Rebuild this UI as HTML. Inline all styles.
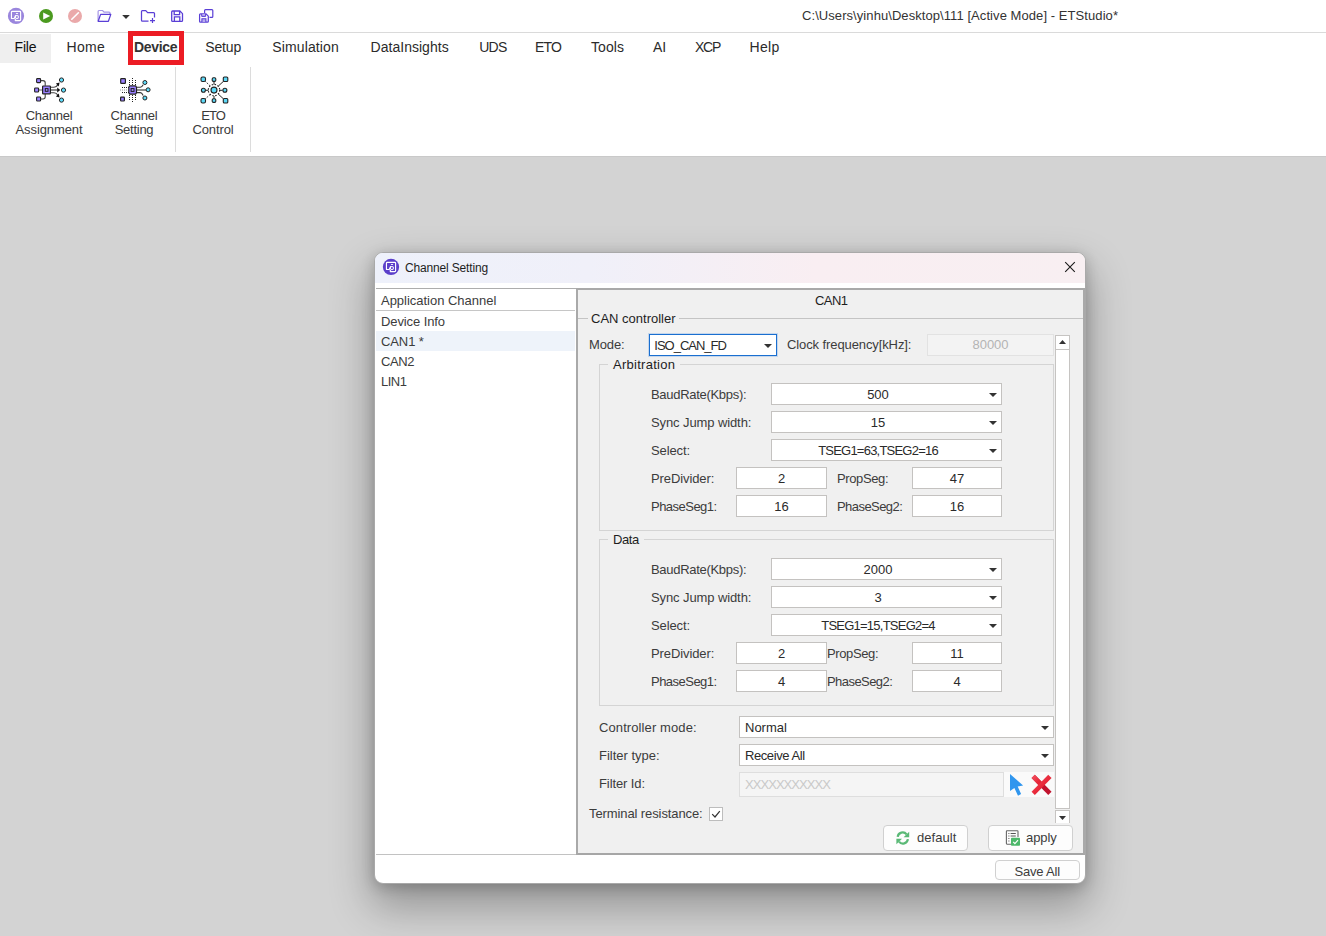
<!DOCTYPE html>
<html>
<head>
<meta charset="utf-8">
<title>ETStudio</title>
<style>
*{box-sizing:border-box;margin:0;padding:0}
html,body{width:1326px;height:936px;overflow:hidden;background:#d3d3d3}
body{font-family:"Liberation Sans",sans-serif;font-size:13px;color:#1a1a1a;position:relative}
.abs{position:absolute}
.t{position:absolute;white-space:nowrap;line-height:16px}
/* top */
#titlebar{left:0;top:0;width:1326px;height:32px;background:#fff}
#tline{left:0;top:32px;width:1326px;height:1px;background:#dadada}
#ribbon{left:0;top:33px;width:1326px;height:123px;background:#fff}
#filetab{left:0;top:34px;width:51px;height:29px;background:#efefef}
.tab{position:absolute;top:39px;font-size:14px;line-height:17px;white-space:nowrap;color:#2b2b2b;letter-spacing:-0.15px}
#devbox{left:128px;top:31px;width:56px;height:34px;border:5px solid #ec1c24;background:#fff}
.sep{position:absolute;top:67px;width:1px;height:85px;background:#dcdcdc}
.rl{position:absolute;font-size:13px;line-height:14px;text-align:center;color:#3a3a3a;white-space:nowrap;letter-spacing:-0.1px}
/* dialog */
#shadow{left:375px;top:253px;width:710px;height:630px;border-radius:8px;box-shadow:0 20px 42px 4px rgba(0,0,0,.30),0 3px 14px 1px rgba(0,0,0,.20)}
#dlg{left:374px;top:252px;width:712px;height:632px;border-radius:9px;background:#fff;overflow:hidden;border:1px solid #a9a9a9}
#dtitle{left:0;top:0;width:710px;height:30px;background:linear-gradient(90deg,#eef1fb 0%,#f0f0f9 30%,#f9eef2 62%,#f8eff2 100%)}
#left{left:1px;top:35px;width:200px;height:567px;background:#fff;border-top:1px solid #adadad;border-bottom:1px solid #c2c2c2}
#right{left:201px;top:35px;width:509px;height:567px;background:#f0f0f0;border:2px solid #a9a9a9;border-bottom-color:#a6a6a6 }
.lbl{position:absolute;white-space:nowrap;line-height:16px;font-size:13px;color:#3c3c3c;letter-spacing:-0.1px}
.dk{color:#1e1e1e}
.box{position:absolute;background:#fff;border:1px solid #c4c2c0;height:22px;font-size:13px;line-height:21px;text-align:center;color:#2a2a2a;white-space:nowrap}
.cmb{padding-right:17px}
.cmb:after{content:"";position:absolute;right:4px;top:9px;border-left:4px solid transparent;border-right:4px solid transparent;border-top:4px solid #333}
.arr{position:absolute;border-left:4px solid transparent;border-right:4px solid transparent;border-top:4px solid #333}
.grp{position:absolute;border:1px solid #d4d4d4}
.gl{position:absolute;background:#f0f0f0;padding:0 3px;font-size:13px;line-height:16px;color:#1e1e1e;white-space:nowrap}
.btn{position:absolute;background:#fdfdfd;border:1px solid #d0d0d0;border-radius:4px;font-size:13px;line-height:20px;color:#2a2a2a;white-space:nowrap}
</style>
</head>
<body>
<!-- title bar -->
<div class="abs" id="titlebar"></div>
<div class="abs" id="tline"></div>
<div class="abs" id="ribbon"></div>
<div class="abs" id="filetab"></div>
<div class="abs" style="left:0;top:156px;width:1326px;height:1px;background:#c9c9c9"></div>
<div class="t" style="left:802px;top:8px;font-size:13px;color:#333;letter-spacing:0.07px">C:\Users\yinhu\Desktop\111 [Active Mode] - ETStudio*</div>

<!-- tabs -->
<div class="abs" id="devbox"></div>
<div class="tab" style="left:14.5px;color:#111">File</div>
<div class="tab" style="left:66.5px;letter-spacing:.3px">Home</div>
<div class="tab" style="left:134px;font-weight:bold;letter-spacing:-0.33px;color:#333">Device</div>
<div class="tab" style="left:205.3px;letter-spacing:-.15px">Setup</div>
<div class="tab" style="left:272.3px;letter-spacing:.12px">Simulation</div>
<div class="tab" style="left:370.6px;letter-spacing:0.02px">DataInsights</div>
<div class="tab" style="left:479.2px;letter-spacing:-.75px">UDS</div>
<div class="tab" style="left:535px;letter-spacing:-.8px">ETO</div>
<div class="tab" style="left:591px;letter-spacing:.1px">Tools</div>
<div class="tab" style="left:653px">AI</div>
<div class="tab" style="left:695px;letter-spacing:-1.25px">XCP</div>
<div class="tab" style="left:749.5px;letter-spacing:.3px">Help</div>

<!-- ribbon -->
<div class="sep" style="left:175px"></div>
<div class="sep" style="left:250px"></div>
<div class="rl" style="left:9px;top:109px;width:80px"><span style="letter-spacing:-.25px">Channel</span><br>Assignment</div>
<div class="rl" style="left:94px;top:109px;width:80px"><span style="letter-spacing:-.2px">Channel</span><br><span style="letter-spacing:-.25px">Setting</span></div>
<div class="rl" style="left:173px;top:109px;width:80px"><span style="letter-spacing:-1px">ETO</span><br>Control</div>

<!-- dialog -->
<div class="abs" id="shadow"></div>
<div class="abs" id="dlg">
  <div class="abs" id="dtitle"></div>
  <div class="t" style="left:30px;top:7px;font-size:12px;color:#1e1e1e;letter-spacing:-0.16px">Channel Setting</div>
  <div class="abs" id="left"></div>
  <div class="abs" id="right"></div>
</div>

<!-- ===== dialog content (page-absolute coords) ===== -->
<div class="abs" id="content" style="left:0;top:0;width:0;height:0">
<!-- left list -->
<div class="abs" style="left:376px;top:310px;width:199px;height:1px;background:#c6c6c6"></div>
<div class="abs" style="left:376px;top:331px;width:199px;height:20px;background:#eef3fa"></div>
<div class="lbl" style="left:381px;top:293px;letter-spacing:-0.02px">Application Channel</div>
<div class="lbl" style="left:381px;top:314px">Device Info</div>
<div class="lbl" style="left:381px;top:334px">CAN1 *</div>
<div class="lbl" style="left:381px;top:354px;letter-spacing:-.4px">CAN2</div>
<div class="lbl" style="left:381px;top:374px;letter-spacing:-.5px">LIN1</div>

<!-- right header -->
<div class="lbl dk" style="left:815px;top:293px;letter-spacing:-.55px">CAN1</div>
<!-- CAN controller group -->
<div class="abs" style="left:578px;top:318px;width:505px;height:1px;background:#c4c4c4"></div>
<div class="gl" style="left:588px;top:311px">CAN controller</div>
<div class="lbl" style="left:589px;top:337px">Mode:</div>
<div class="box" style="left:649px;top:334px;width:128px;height:22px;border:1px solid #1a6fd0;box-shadow:0 0 0 1px rgba(120,170,230,.35);text-align:left;padding-left:4.300px;line-height:22px;letter-spacing:-1px" >ISO_CAN_FD<span class="arr" style="right:4px;top:9px"></span></div>
<div class="lbl" style="left:787px;top:337px">Clock frequency[kHz]:</div>
<div class="box" style="left:927px;top:334px;width:127px;background:#f3f3f3;border-color:#e2e2e2;color:#b4b4b4;line-height:19px">80000</div>

<!-- scrollbar -->
<div class="abs" style="left:1055px;top:335px;width:15px;height:474px;background:#fff;border:1px solid #c6c4c2"></div>
<div class="abs" style="left:1055px;top:335px;width:15px;height:15px;background:#fff;border:1px solid #c6c4c2"></div>
<div class="abs" style="left:1055px;top:810px;width:15px;height:13px;background:#fff;border:1px solid #c6c4c2;border-bottom:none"></div>
<div class="abs" style="left:1059px;top:340px;width:7px;height:4px;background:#333;clip-path:polygon(50% 0,100% 100%,0 100%)"></div>
<div class="abs" style="left:1059px;top:816px;width:7px;height:4px;background:#333;clip-path:polygon(0 0,100% 0,50% 100%)"></div>

<!-- Arbitration -->
<div class="grp" style="left:599px;top:364px;width:455px;height:167px"></div>
<div class="gl" style="left:608px;top:357px;padding:0 5px;letter-spacing:.27px">Arbitration</div>
<div class="lbl" style="left:651px;top:387px;letter-spacing:-.3px">BaudRate(Kbps):</div>
<div class="box cmb" style="left:771px;top:383px;width:231px">500</div>
<div class="lbl" style="left:651px;top:415px">Sync Jump width:</div>
<div class="box cmb" style="left:771px;top:411px;width:231px">15</div>
<div class="lbl" style="left:651px;top:443px">Select:</div>
<div class="box cmb" style="left:771px;top:439px;width:231px;letter-spacing:-.78px">TSEG1=63,TSEG2=16</div>
<div class="lbl" style="left:651px;top:471px">PreDivider:</div>
<div class="box" style="left:736px;top:467px;width:91px">2</div>
<div class="lbl" style="left:837px;top:471px;letter-spacing:-.38px">PropSeg:</div>
<div class="box" style="left:912px;top:467px;width:90px">47</div>
<div class="lbl" style="left:651px;top:499px;letter-spacing:-.52px">PhaseSeg1:</div>
<div class="box" style="left:736px;top:495px;width:91px">16</div>
<div class="lbl" style="left:837px;top:499px;letter-spacing:-.56px">PhaseSeg2:</div>
<div class="box" style="left:912px;top:495px;width:90px">16</div>

<!-- Data -->
<div class="grp" style="left:599px;top:539px;width:455px;height:167px"></div>
<div class="gl" style="left:608px;top:532px;padding:0 5px;letter-spacing:-.4px">Data</div>
<div class="lbl" style="left:651px;top:562px;letter-spacing:-.3px">BaudRate(Kbps):</div>
<div class="box cmb" style="left:771px;top:558px;width:231px">2000</div>
<div class="lbl" style="left:651px;top:590px">Sync Jump width:</div>
<div class="box cmb" style="left:771px;top:586px;width:231px">3</div>
<div class="lbl" style="left:651px;top:618px">Select:</div>
<div class="box cmb" style="left:771px;top:614px;width:231px;letter-spacing:-.76px">TSEG1=15,TSEG2=4</div>
<div class="lbl" style="left:651px;top:646px">PreDivider:</div>
<div class="box" style="left:736px;top:642px;width:91px">2</div>
<div class="lbl" style="left:827px;top:646px;letter-spacing:-.38px">PropSeg:</div>
<div class="box" style="left:912px;top:642px;width:90px">11</div>
<div class="lbl" style="left:651px;top:674px;letter-spacing:-.52px">PhaseSeg1:</div>
<div class="box" style="left:736px;top:670px;width:91px">4</div>
<div class="lbl" style="left:827px;top:674px;letter-spacing:-.56px">PhaseSeg2:</div>
<div class="box" style="left:912px;top:670px;width:90px">4</div>

<!-- bottom rows -->
<div class="lbl" style="left:599px;top:720px;letter-spacing:.1px">Controller mode:</div>
<div class="box cmb" style="left:739px;top:716px;width:315px;text-align:left;padding-left:5px">Normal</div>
<div class="lbl" style="left:599px;top:748px;letter-spacing:0px">Filter type:</div>
<div class="box cmb" style="left:739px;top:744px;width:315px;text-align:left;padding-left:5px;letter-spacing:-.42px">Receive All</div>
<div class="lbl" style="left:599px;top:776px">Filter Id:</div>
<div class="abs" style="left:1004px;top:772px;width:50px;height:25px;background:#fafafa"></div>
<div class="box" style="left:739px;top:772px;width:265px;height:25px;background:#f5f5f5;border-color:#dedede;color:#c9c9c9;text-align:left;padding-left:5px;line-height:23px;letter-spacing:-.95px">XXXXXXXXXXX</div>
<div class="lbl" style="left:589px;top:806px">Terminal resistance:</div>
<div class="abs" style="left:709px;top:807px;width:14px;height:14px;background:#fff;border:1px solid #bdbdbd"></div>

<!-- buttons -->
<div class="btn" style="left:883px;top:825px;width:85px;height:26px"></div>
<div class="lbl" style="left:917px;top:830px;letter-spacing:.05px">default</div>
<div class="btn" style="left:988px;top:825px;width:85px;height:26px"></div>
<div class="lbl" style="left:1026px;top:830px">apply</div>
<div class="btn" style="left:995px;top:860px;width:85px;height:20px"></div>
<div class="lbl" style="left:1014.5px;top:864px;letter-spacing:-.2px">Save All</div>
</div>

<!-- ===== icons ===== -->
<!-- titlebar icons -->
<svg class="abs" style="left:0;top:0" width="230" height="32" viewBox="0 0 230 32">
  <!-- app -->
  <circle cx="16" cy="15.900" r="8.100" fill="#9a86dd"/>
  <g transform="translate(-375 -251)">
  <path d="M390.300 269.900V271.550H394.700Q395.600 271.550 395.600 270.650V263.300Q395.600 262.400 394.700 262.400H387.350Q386.450 262.400 386.450 263.300V269.450H389.200L390.700 266.300" fill="none" stroke="#fff" stroke-width="1.150" stroke-linejoin="round"/>
  <circle cx="391.900" cy="268.100" r="1.550" fill="none" stroke="#fff" stroke-width="1.050"/>
  <path d="M390.900 264.500H393.100" stroke="#fff" stroke-width=".900"/>
  </g>
  <!-- play -->
  <circle cx="46" cy="16" r="7" fill="#4b9a1f"/>
  <path d="M43.2 12.4L50.2 16L43.2 19.6Z" fill="#fff"/>
  <!-- stop -->
  <circle cx="75" cy="16" r="7" fill="#eaa9aa"/>
  <path d="M71.8 19.2L78.4 12.8" stroke="#fff" stroke-width="1.6" stroke-linecap="round"/>
  <!-- folder open -->
  <path d="M98.1 21.3V11.4q0-.9.9-.9h3.6l1.5 1.7h5q.9 0 .9.9v1.3" fill="none" stroke="#a595e6" stroke-width="1.2"/>
  <path d="M98.2 21.3L100.6 14.4h10.2L108.4 21.3Z" fill="none" stroke="#5a3fd6" stroke-width="1.25" stroke-linejoin="round"/>
  <!-- caret -->
  <path d="M122.2 15.1h7.6L126 19Z" fill="#333"/>
  <!-- new folder -->
  <path d="M148.5 21.2H142.4q-.9 0-.9-.9V11.6q0-.9.9-.9h3.4l1.8 2h6q.9 0 .9.9v4" fill="none" stroke="#5a3fd6" stroke-width="1.25" stroke-linejoin="round"/>
  <path d="M150 20.6h5M152.5 18.1v5" stroke="#5a3fd6" stroke-width="1.2"/>
  <!-- save -->
  <path d="M171.7 11.9q0-.9.9-.9h7.3l2.6 2.6v6.9q0 .9-.9.9h-9q-.9 0-.9-.9Z" fill="none" stroke="#5a3fd6" stroke-width="1.3" stroke-linejoin="round"/>
  <path d="M174.2 11v3.6h5.4V11M174.4 21.4v-4.6h5.4v4.6" fill="none" stroke="#5a3fd6" stroke-width="1.3"/>
  <!-- save all -->
  <path d="M204.6 13V10.6q0-.9.9-.9h6.4q.9 0 .9.9v5.8q0 .9-.9.9h-2.4" fill="none" stroke="#5a3fd6" stroke-width="1.2"/>
  <path d="M199.6 14.8q0-.9.9-.9h5.6l2.2 2.2v5.1q0 .9-.9.9h-6.900q-.9 0-.9-.9Z" fill="none" stroke="#5a3fd6" stroke-width="1.25" stroke-linejoin="round"/>
  <path d="M201.7 14v2.400h3.900V14" fill="#b9acef" stroke="#5a3fd6" stroke-width="1"/>
  <path d="M201.900 22v-3.300h4v3.300" fill="#b9acef" stroke="#5a3fd6" stroke-width="1.1"/>
</svg>

<!-- ribbon icon 1 : channel assignment -->
<svg class="abs" style="left:28px;top:70px" width="44" height="40" viewBox="28 70 44 40">
  <g fill="none" stroke="#444" stroke-width="1.1">
    <path d="M40.800 80.600h2.200q2.200 0 2.200 2.200v3"/>
    <path d="M40.800 99h2.200q2.200 0 2.200-2.200v-3"/>
    <path d="M50.600 87.200h3.400q2.400 0 4-2.600"/>
    <path d="M50.600 92.800h3.400q2.400 0 4 2.600"/>
  </g>
  <path d="M38.700 90h3.600" stroke="#aaa" stroke-width="1.8"/>
  <path d="M50.600 90h7" stroke="#888" stroke-width="1.900"/>
  <path d="M57.200 87.500L60.200 90L57.200 92.500Z" fill="#111"/>
  <path d="M55.900 83.500L59.600 82.600L58.700 86.500Z" fill="#111"/>
  <path d="M55.900 96.500L59.600 97.400L58.700 93.500Z" fill="#111"/>
  <g fill="#9a80ff" stroke="#222" stroke-width="1.1">
    <rect x="36.600" y="78.600" width="4" height="4" rx=".8"/>
    <rect x="34.600" y="88" width="4" height="4" rx=".8"/>
    <rect x="36.600" y="97" width="4" height="4" rx=".8"/>
    <rect x="42.600" y="86" width="7.800" height="7.800" rx=".6" stroke-width="1.200"/>
  </g>
  <rect x="45.300" y="88.600" width="2.700" height="2.700" fill="#a48cff" stroke="#1a1a1a" stroke-width="1"/>
  <g fill="#5edcfb" stroke="#222" stroke-width="1">
    <circle cx="61.500" cy="80" r="2.100"/>
    <circle cx="63.500" cy="90.100" r="2.100"/>
    <circle cx="61.500" cy="100.100" r="2.100"/>
  </g>
</svg>

<!-- ribbon icon 2 : channel setting -->
<svg class="abs" style="left:112px;top:70px" width="44" height="40" viewBox="112 70 44 40">
  <g stroke="#222" stroke-width="1" stroke-dasharray="1 1" fill="none">
    <path d="M129.500 80v6M132.500 78v8M135.500 80v6"/>
    <path d="M129.500 95v5M132.500 95v7M135.500 95v5"/>
    <path d="M122 87.500h7M122 92.500h7"/>
  </g>
  <path d="M120 90h9" stroke="#999" stroke-width="1.200" stroke-dasharray="1 1"/>
  <g fill="none" stroke="#333" stroke-width="1.100">
    <path d="M137 87.300h3.200q1.600 0 3-2.600"/>
    <path d="M137 92.600h3.200q1.600 0 3 2.800"/>
  </g>
  <path d="M137 90h9.500" stroke="#8a8a8a" stroke-width="1.900"/>
  <g fill="#9a80ff" stroke="#222" stroke-width="1.200">
    <rect x="120.700" y="78.700" width="4.700" height="4.700" rx=".7"/>
    <rect x="120.600" y="97.200" width="3.800" height="3.800" rx=".7"/>
    <path d="M128.800 87.200l.9-1.300h5.900l.9 1.300v5.600l-.9 1.300h-5.900l-.9-1.300Z"/>
  </g>
  <rect x="131.100" y="88.600" width="2.900" height="2.800" fill="#a48cff" stroke="#1a1a1a" stroke-width="1"/>
  <g fill="#5edcfb" stroke="#222" stroke-width="1">
    <circle cx="144.900" cy="82.500" r="2"/>
    <circle cx="148.100" cy="89.800" r="2"/>
    <circle cx="144.900" cy="98" r="2"/>
  </g>
</svg>

<!-- ribbon icon 3 : ETO control -->
<svg class="abs" style="left:192px;top:70px" width="44" height="40" viewBox="192 70 44 40">
  <g stroke="#222" stroke-width="1" fill="none">
    <path d="M218.400 86L223.600 81.200M218.400 94.200L223.600 99"/>
    <path d="M205.500 90.300h3M219.500 90.300h3"/>
    <path d="M214 82v2.500M214 96v2.500"/>
    <path d="M205.400 81.400L210 85.800M205.400 98.800L210 94.600" stroke-dasharray="1.200 1.200"/>
    <circle cx="214" cy="90.100" r="5.700" stroke-width="1.150" stroke-dasharray="1.500 1.480"/>
  </g>
  <g fill="#5cd8f7" stroke="#222" stroke-width="1.100">
    <circle cx="214" cy="90.100" r="3"/>
    <rect x="201" y="77" width="4.500" height="4.500" rx="1.500"/>
    <rect x="223.300" y="77" width="4.500" height="4.500" rx="1"/>
    <rect x="201" y="98.500" width="4.500" height="4.500" rx="1.500"/>
    <rect x="223.300" y="98.500" width="4.500" height="4.500" rx="1"/>
    <rect x="212.200" y="77.800" width="3.600" height="3.600" rx="1.200"/>
    <rect x="212.200" y="98.800" width="3.600" height="3.600" rx="1.200"/>
    <circle cx="203.400" cy="90.300" r="2"/>
    <circle cx="224.900" cy="90.300" r="2"/>
  </g>
</svg>

<!-- dialog title icon + close -->
<svg class="abs" style="left:380px;top:256px" width="24" height="24" viewBox="380 256 24 24">
  <circle cx="391" cy="266.900" r="8.150" fill="#5b3fca"/>
  <path d="M390.300 269.900V271.550H394.700Q395.600 271.550 395.600 270.650V263.300Q395.600 262.400 394.700 262.400H387.350Q386.450 262.400 386.450 263.300V269.450H389.200L390.700 266.300" fill="none" stroke="#fff" stroke-width="1.150" stroke-linejoin="round"/>
  <circle cx="391.900" cy="268.100" r="1.550" fill="none" stroke="#fff" stroke-width="1.050"/>
  <path d="M390.900 264.500H393.100" stroke="#fff" stroke-width=".900"/>
</svg>
<svg class="abs" style="left:1062px;top:259px" width="16" height="16" viewBox="0 0 16 16">
  <path d="M3.200 3.200L12.800 12.800M12.800 3.200L3.200 12.800" stroke="#1a1a1a" stroke-width="1.100"/>
</svg>

<!-- cursor + red X -->
<svg class="abs" style="left:1004px;top:772px" width="50" height="25" viewBox="1004 772 50 25">
  <path d="M1010 773.900L1023.100 785.400L1017.700 786.500L1021.100 794L1018 795.700L1014.400 788L1010 791Z" fill="#3096ee"/>
  <defs><linearGradient id="rx" x1="0" y1="0" x2="1" y2="1"><stop offset="0" stop-color="#f24d5c"/><stop offset=".55" stop-color="#e8283a"/><stop offset="1" stop-color="#e01a30"/></linearGradient></defs>
  <path d="M1033.200 776.400L1049.900 793.400" stroke="#c1132e" stroke-width="4.600"/>
  <path d="M1033.200 776.400L1042.400 785.800" stroke="url(#rx)" stroke-width="4.600"/>
  <path d="M1049.900 776.400L1033.200 793.400" stroke="url(#rx)" stroke-width="4.600"/>
</svg>

<!-- checkbox tick -->
<svg class="abs" style="left:709px;top:807px" width="14" height="14" viewBox="0 0 14 14">
  <path d="M3.200 7.200L6 10L10.800 4.200" fill="none" stroke="#333" stroke-width="1.200"/>
</svg>

<!-- default icon (refresh) -->
<svg class="abs" style="left:895px;top:830px" width="16" height="16" viewBox="895 830 16 16">
  <g fill="none" stroke="#5ab976" stroke-width="2.200">
    <path d="M897.700 836.900A5 5 0 0 1 906.600 834.400"/>
    <path d="M907.900 839.100A5 5 0 0 1 899 841.600"/>
  </g>
  <path d="M909.200 831.700L909.200 837.300L903.600 837.300Z" fill="#5ab976"/>
  <path d="M896.400 844.300L896.400 838.700L902 838.700Z" fill="#5ab976"/>
</svg>

<!-- apply icon -->
<svg class="abs" style="left:1004px;top:829px" width="18" height="18" viewBox="1004 829 18 18">
  <path d="M1018 837V831.400q0-.6-.6-.6H1007q-.6 0-.6.6V843.600q0 .6.6.6H1011" fill="none" stroke="#666" stroke-width="1.100"/>
  <path d="M1008.400 833.500h1M1010.600 833.500h5.200M1008.400 836h1M1010.600 836h5.200M1008.400 838.500h1M1008.400 841h1" stroke="#555" stroke-width="1"/>
  <rect x="1011" y="837.800" width="9" height="8" rx=".8" fill="#4cb86a"/>
  <path d="M1013.200 841.900L1014.900 843.600L1018 840.200" fill="none" stroke="#fff" stroke-width="1.200"/>
</svg>
</body>
</html>
